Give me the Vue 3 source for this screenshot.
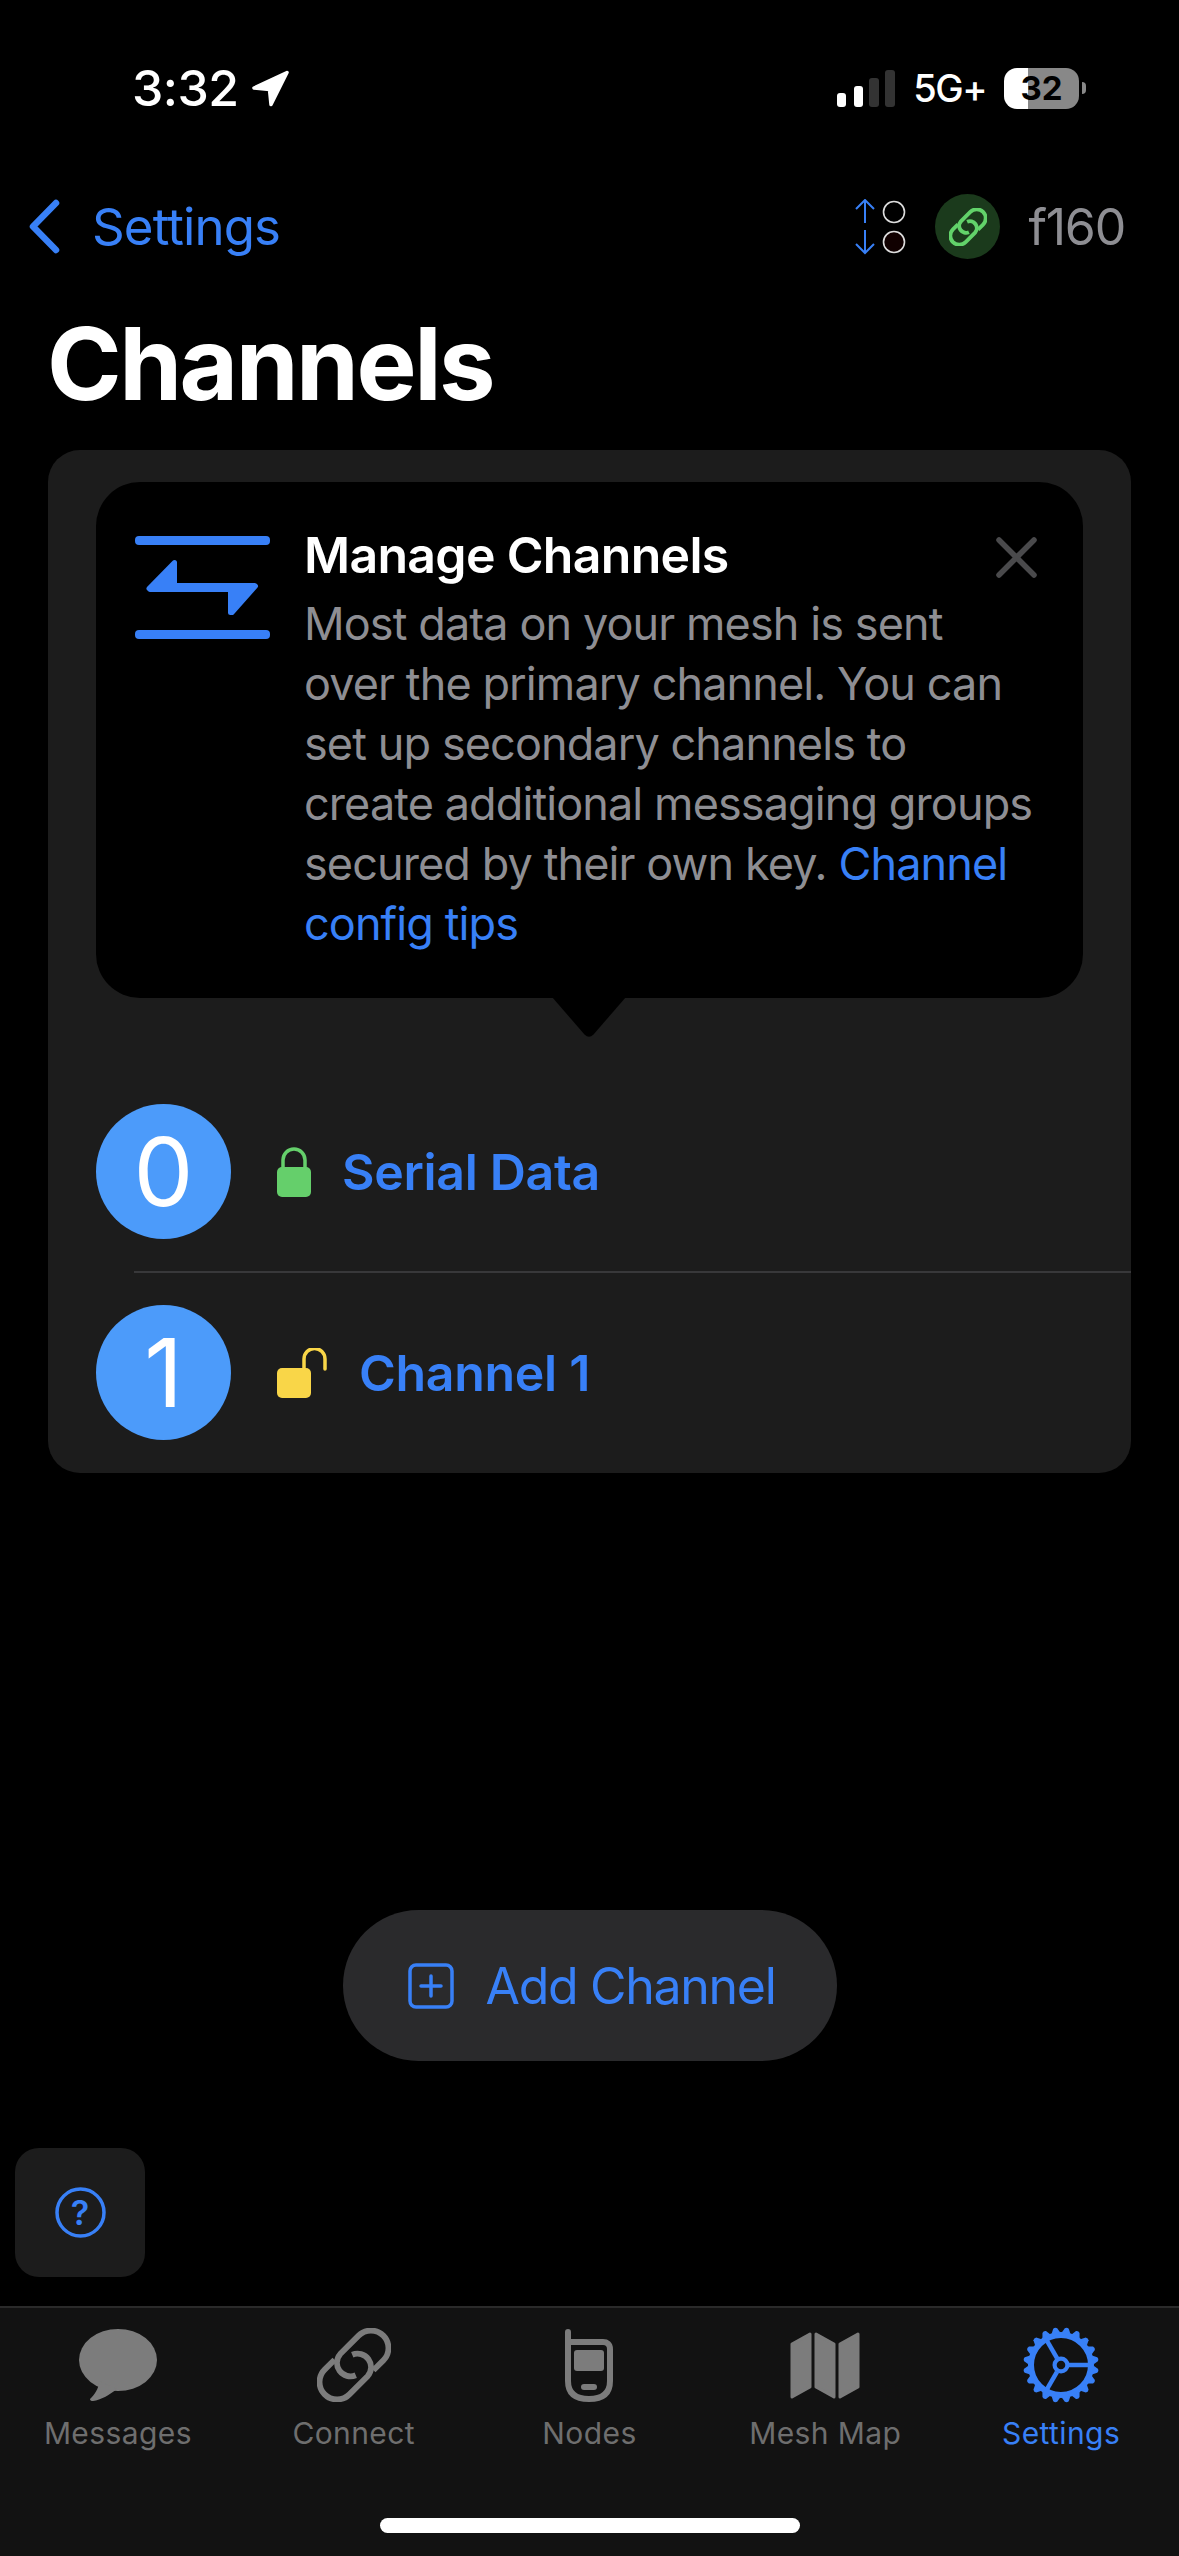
<template>
  <div class="app">
    <!-- status bar -->
    <div class="status-bar">
      <div class="status-left">
        <span class="time">3:32</span>
        <svg class="location" width="39" height="39" viewBox="0 0 39 39">
          <path d="M36 3.5 L3 19 L18.5 20.5 L20 35.5 Z" fill="#fff" stroke="#fff" stroke-width="3.5" stroke-linejoin="round" />
        </svg>
      </div>
      <div class="status-right">
        <svg width="58" height="37" viewBox="0 0 58 37">
          <rect x="0" y="23" width="9" height="14" rx="3" fill="#fff" />
          <rect x="17" y="16" width="9" height="21" rx="3" fill="#fff" />
          <rect x="32" y="8" width="10" height="29" rx="3" fill="#333" />
          <rect x="48" y="0" width="10" height="37" rx="3" fill="#333" />
        </svg>
        <span class="network">5G+</span>
        <div class="battery-wrap">
          <div class="battery">32</div>
          <div class="battery-nub"></div>
        </div>
      </div>
    </div>

    <!-- nav bar -->
    <div class="nav-bar">
      <div class="nav-back">
        <svg width="32" height="55" viewBox="0 0 32 55">
          <path d="M28 4 L5 27.5 L28 51" fill="none" stroke="#3880f7" stroke-width="6.5" stroke-linecap="round" stroke-linejoin="round" />
        </svg>
        <span>Settings</span>
      </div>
      <div class="nav-right">
        <svg width="51" height="56" viewBox="0 0 51 56">
          <path d="M10 1 V24 M1 10 L10 1 L19 10 M10 31 V54 M1 45 L10 54 L19 45" fill="none" stroke="#3880f7" stroke-width="2" />
          <circle cx="39" cy="13" r="10.5" fill="none" stroke="#ddd" stroke-width="1.6" />
          <circle cx="39" cy="43" r="10.5" fill="#100000" stroke="#ddd" stroke-width="1.6" />
        </svg>
        <div class="link-badge">
          <svg width="38" height="38" viewBox="-37 -37 74 74">
            <g transform="rotate(-45)" fill="none" stroke="#62d26a" stroke-width="7.5">
              <path :d="linkPath" />
              <path :d="linkPath" transform="rotate(180)" />
            </g>
          </svg>
        </div>
        <span class="node-id">f160</span>
      </div>
    </div>

    <h1 class="page-title">Channels</h1>

    <!-- channel list card -->
    <div class="card">
      <div class="tip">
        <svg class="tip-icon" width="135" height="103" viewBox="0 0 135 103">
          <rect x="0" y="0" width="135" height="9" rx="4" fill="#3880f7" />
          <rect x="0" y="94" width="135" height="9" rx="4" fill="#3880f7" />
          <path d="M39.5 26.5 L14 52.5 L15 53.5 L95.5 53.5 L95.5 76.5 L97 76.5 L120.5 50 L119.5 49.5 L39.5 49.5 Z" fill="#3880f7" stroke="#3880f7" stroke-width="5" stroke-linejoin="round" />
        </svg>
        <div class="tip-text">
          <div class="tip-title">Manage Channels</div>
          <div class="tip-body">Most data on your mesh is sent over the primary channel. You can set up secondary channels to create additional messaging groups secured by their own key. <span class="tip-link">Channel config tips</span></div>
        </div>
        <svg class="tip-close" width="41" height="41" viewBox="0 0 41 41">
          <path d="M3 3 L38 38 M38 3 L3 38" stroke="#4a4a4c" stroke-width="5.5" stroke-linecap="round" />
        </svg>
        <svg class="tip-arrow" width="74" height="41" viewBox="0 0 74 41">
          <path d="M0 0 H74 L41.5 37.5 Q37 42 32.5 37.5 Z" fill="#000" />
        </svg>
      </div>

      <div class="channels">
        <template v-for="(channel, i) in channels" :key="channel.index">
          <div v-if="i > 0" class="divider"></div>
          <div class="channel-row">
            <div class="channel-index">{{ channel.index }}</div>
            <div class="channel-name">
              <svg v-if="channel.locked" width="34" height="50" viewBox="0 0 34 50">
                <path d="M6 22 V13 A11 11 0 0 1 28 13 V22" fill="none" stroke="#65cf6b" stroke-width="3.5" />
                <rect x="0" y="20" width="34" height="30" rx="5" fill="#65cf6b" />
              </svg>
              <svg v-else width="51" height="50" viewBox="0 0 51 50">
                <path d="M27 22 V11 A10.5 10.5 0 0 1 48 11 V21" fill="none" stroke="#f9d648" stroke-width="3.5" stroke-linecap="round" />
                <rect x="0" y="20" width="34" height="30" rx="5" fill="#f9d648" />
              </svg>
              <span>{{ channel.name }}</span>
            </div>
          </div>
        </template>
      </div>
    </div>

    <button class="add-button">
      <svg width="46" height="46" viewBox="0 0 46 46">
        <rect x="2" y="2" width="42" height="42" rx="6" fill="none" stroke="#3880f7" stroke-width="3.5" />
        <path d="M23 13 V33 M13 23 H33" stroke="#3880f7" stroke-width="3.5" stroke-linecap="round" />
      </svg>
      <span>Add Channel</span>
    </button>

    <div class="help-button">
      <svg width="51" height="51" viewBox="0 0 51 51">
        <circle cx="25.5" cy="25.5" r="23.5" fill="none" stroke="#3880f7" stroke-width="3.5" />
      </svg>
      <span class="help-mark">?</span>
    </div>

    <!-- tab bar -->
    <div class="tab-bar">
      <div class="tabs">
        <div v-for="tab in tabs" :key="tab.label" class="tab" :class="{ active: tab.active }">
          <div class="tab-icon">
            <svg v-if="tab.icon === 'messages'" width="78" height="72" viewBox="0 0 78 72">
              <ellipse cx="39" cy="31" rx="39" ry="31" fill="currentColor" />
              <path d="M20 52 C20 60 15 66 11 70 Q11 72 14 72 C22 71 30 66 38 60 Z" fill="currentColor" />
            </svg>
            <svg v-else-if="tab.icon === 'connect'" width="74" height="74" viewBox="-37 -37 74 74">
              <g transform="rotate(-45)" fill="none" stroke="currentColor" stroke-width="5.8">
                <path :d="linkPath" />
                <path :d="linkPath" transform="rotate(180)" />
              </g>
            </svg>
            <svg v-else-if="tab.icon === 'nodes'" width="48" height="73" viewBox="0 0 48 73">
              <path d="M3 3 V52 C3 65 11 70 24 70 C37 70 45 65 45 52 V20 C45 15 42 13 38 13 H3" fill="none" stroke="currentColor" stroke-width="6" stroke-linecap="round" />
              <rect x="9" y="21" width="30" height="21" rx="3" fill="currentColor" />
              <rect x="16" y="55" width="16" height="6" rx="3" fill="currentColor" />
            </svg>
            <svg v-else-if="tab.icon === 'map'" width="70" height="67" viewBox="0 0 70 67">
              <g fill="currentColor" stroke="currentColor" stroke-width="3" stroke-linejoin="round">
                <path d="M20 2 L2 12 V65 L20 55 Z" />
                <path d="M26 2 L44 12 V65 L26 55 Z" />
                <path d="M68 2 L50 12 V65 L68 55 Z" />
              </g>
            </svg>
            <svg v-else width="76" height="76" viewBox="-38 -38 76 76">
              <circle r="30" fill="none" stroke="currentColor" stroke-width="6" />
              <circle r="6.4" fill="none" stroke="currentColor" stroke-width="4.2" />
              <g stroke="currentColor" stroke-width="4.5">
                <path d="M8 0 H30" />
                <path d="M8 0 H30" transform="rotate(120)" />
                <path d="M8 0 H30" transform="rotate(240)" />
              </g>
              <path v-for="deg in teeth" :key="deg" d="M-4.5 -32 L-2 -37 Q0 -38.5 2 -37 L4.5 -32 Z" fill="currentColor" :transform="`rotate(${deg})`" />
            </svg>
          </div>
          <div class="tab-label">{{ tab.label }}</div>
        </div>
      </div>
      <div class="home-indicator"></div>
    </div>
  </div>
</template>

<script setup>
  const channels = [
    { index: 0, name: 'Serial Data', locked: true },
    { index: 1, name: 'Channel 1', locked: false }
  ];

  const tabs = [
    { label: 'Messages', icon: 'messages' },
    { label: 'Connect', icon: 'connect' },
    { label: 'Nodes', icon: 'nodes' },
    { label: 'Mesh Map', icon: 'map' },
    { label: 'Settings', icon: 'settings', active: true }
  ];

  // One half of the chain link, the other half is this rotated 180deg
  const linkPath = 'M10 17.5 H24 A17.5 17.5 0 0 0 24 -17.5 H-2 A13.5 13.5 0 0 0 -6 8.5';

  const teeth = Array.from({ length: 20 }, (_, i) => 9 + i * 18);
</script>

<style>
  html, body {
    margin: 0;
    background: #000;
  }
</style>

<style scoped>
  .app {
    width: 1179px;
    height: 2556px;
    background: #000;
    display: flex;
    flex-direction: column;
    font-family: Inter, "Liberation Sans", sans-serif;
    overflow: hidden;
  }

  /* --- Status bar --- */
  .status-bar {
    height: 60px;
    margin-top: 58px;
    padding: 0 93px 0 132px;
    display: flex;
    align-items: center;
    justify-content: space-between;
  }

  .status-left {
    display: flex;
    align-items: center;
    gap: 12px;
  }

  .time {
    color: #fff;
    font-size: 50px;
    font-weight: 500;
    letter-spacing: -0.5px;
  }

  .status-right {
    display: flex;
    align-items: center;
    gap: 18px;
  }

  .network {
    color: #fff;
    font-size: 38px;
    font-weight: 500;
    letter-spacing: -1.5px;
  }

  .battery-wrap {
    display: flex;
    align-items: center;
    gap: 3px;
  }

  .battery {
    width: 75px;
    height: 41px;
    border-radius: 13px;
    background: linear-gradient(90deg, #fff 32%, #888 32%);
    color: #000;
    font-size: 33px;
    font-weight: 700;
    line-height: 41px;
    text-align: center;
  }

  .battery-nub {
    width: 4px;
    height: 12px;
    border-radius: 0 4px 4px 0;
    background: #888;
  }

  /* --- Nav bar --- */
  .nav-bar {
    height: 65px;
    margin-top: 76px;
    padding: 0 54px 0 28px;
    display: flex;
    align-items: center;
    justify-content: space-between;
  }

  .nav-back {
    display: flex;
    align-items: center;
    gap: 32px;
    color: #3880f7;
    font-size: 51px;
    letter-spacing: -0.9px;
  }

  .nav-right {
    display: flex;
    align-items: center;
  }

  .link-badge {
    width: 65px;
    height: 65px;
    margin: 0 28px 0 29px;
    border-radius: 50%;
    background: #1b3a1c;
    display: flex;
    align-items: center;
    justify-content: center;
  }

  .node-id {
    color: #8e8e93;
    font-size: 50px;
    letter-spacing: -1.2px;
  }

  .page-title {
    margin: 44px 0 27px 47px;
    color: #fff;
    font-size: 101px;
    font-weight: 700;
    line-height: 120px;
    letter-spacing: -2.5px;
  }

  /* --- Card --- */
  .card {
    margin: 0 48px;
    padding-top: 32px;
    background: #1c1c1c;
    border-radius: 32px;
  }

  .tip {
    position: relative;
    margin: 0 48px;
    height: 516px;
    box-sizing: border-box;
    padding: 43px 0 0 39px;
    background: #000;
    border-radius: 44px;
    display: flex;
  }

  .tip-icon {
    flex-shrink: 0;
    margin-top: 11px;
  }

  .tip-text {
    margin-left: 34px;
    width: 735px;
  }

  .tip-title {
    color: #fff;
    font-size: 50px;
    font-weight: 600;
    line-height: 60px;
    letter-spacing: -0.7px;
    margin-bottom: 9px;
    white-space: nowrap;
  }

  .tip-body {
    color: #8e8e93;
    font-size: 45px;
    line-height: 60px;
    letter-spacing: -0.9px;
  }

  .tip-link {
    color: #3880f7;
  }

  .tip-close {
    position: absolute;
    top: 55px;
    right: 46px;
  }

  .tip-arrow {
    position: absolute;
    left: 456px;
    top: 515px;
  }

  /* --- Channel rows --- */
  .channels {
    margin-top: 106px;
    padding-bottom: 33px;
  }

  .channel-row {
    padding-left: 48px;
    display: flex;
    align-items: center;
    gap: 46px;
  }

  .divider {
    height: 2px;
    margin: 32px 0 32px 86px;
    background: #38383a;
  }

  .channel-index {
    width: 135px;
    height: 135px;
    border-radius: 50%;
    background: #4c9bfa;
    color: #fff;
    font-size: 95px;
    font-weight: 400;
    display: flex;
    align-items: center;
    justify-content: center;
  }

  .channel-name {
    display: flex;
    align-items: center;
    gap: 31px;
    color: #3880f7;
    font-size: 50px;
    font-weight: 600;
    letter-spacing: -0.3px;
  }

  /* --- Add button --- */
  .add-button {
    align-self: center;
    width: 494px;
    height: 151px;
    margin-top: 437px;
    border: none;
    padding: 0 0 0 4px;
    border-radius: 76px;
    background: #2a2a2c;
    color: #3880f7;
    font-family: inherit;
    font-size: 50px;
    letter-spacing: -1.3px;
    display: flex;
    align-items: center;
    justify-content: center;
    gap: 32px;
  }

  .help-button {
    position: relative;
    width: 130px;
    height: 129px;
    margin: 87px 0 0 15px;
    border-radius: 24px;
    background: #1c1c1c;
    display: flex;
    align-items: center;
    justify-content: center;
  }

  .help-mark {
    position: absolute;
    color: #3880f7;
    font-size: 34px;
    font-weight: 600;
  }

  /* --- Tab bar --- */
  .tab-bar {
    margin-top: auto;
    height: 250px;
    box-sizing: border-box;
    padding-top: 19px;
    background: #121212;
    border-top: 2px solid #2a2a2a;
    display: flex;
    flex-direction: column;
    align-items: center;
  }

  .tabs {
    width: 100%;
    display: grid;
    grid-template-columns: repeat(5, 1fr);
  }

  .tab {
    display: flex;
    flex-direction: column;
    align-items: center;
    color: #7c7c7c;
  }

  .tab.active {
    color: #3880f7;
  }

  .tab-icon {
    height: 76px;
    display: flex;
    align-items: center;
    justify-content: center;
  }

  .tab-label {
    margin-top: 10px;
    font-size: 30px;
    line-height: 40px;
    letter-spacing: 0.4px;
    color: #6e6e6e;
  }

  .tab.active .tab-label {
    color: #3880f7;
  }

  .home-indicator {
    width: 420px;
    height: 15px;
    margin-top: 65px;
    border-radius: 8px;
    background: #fff;
  }
</style>
